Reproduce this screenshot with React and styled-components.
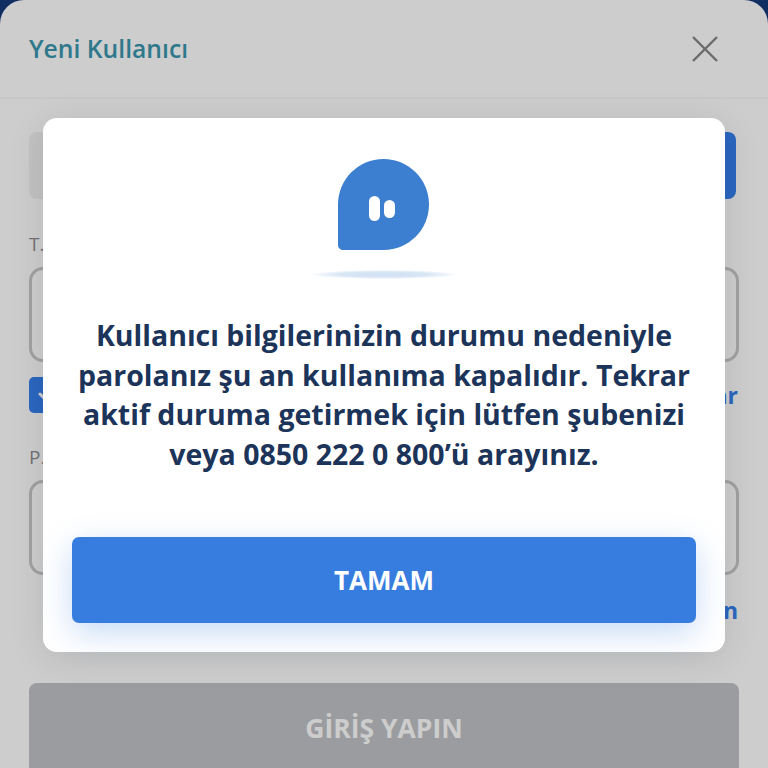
import React from "react";
import styled, { createGlobalStyle } from "styled-components";

const Global = createGlobalStyle`
  html, body { margin: 0; padding: 0; background: #163a7c; }
  #root { width: 768px; height: 768px; overflow: hidden; position: relative; }
  * { box-sizing: border-box; }
`;
const Sheet = styled.div`
  height: 768px; background: #ffffff; border-radius: 24px 24px 0 0; overflow: hidden;
  font-family: "Open Sans", "Noto Sans", sans-serif; display: flex; flex-direction: column;
`;
const Header = styled.header`
  height: 99px; flex: none; display: flex; align-items: center; justify-content: space-between;
  padding: 0 50px 0 29px; border-bottom: 2px solid #f8f8f8;
`;
const Title = styled.h1`
  margin: 0; font-size: 24.7px; font-weight: 600; color: #3a96ae; letter-spacing: 0;
`;
const Close = styled.button`
  width: 26px; height: 26px; padding: 0; border: 0; background: none; display: block;
  svg { display: block; }
`;
const Form = styled.div`
  flex: 1; display: flex; flex-direction: column; padding: 33px 29px 0;
`;
const Tabs = styled.div`
  height: 67px; display: flex; margin-right: 3px; flex: none;
`;
const Tab = styled.div`
  flex: 1; background: ${p => (p.$active ? "#3580ee" : "#f2f2f2")};
  border-radius: ${p => (p.$active ? "0 8px 8px 0" : "8px 0 0 8px")};
`;
const Label = styled.div`
  font-size: 19px; color: #8e8e93; line-height: 24px; margin-top: ${p => p.$top}px;
`;
const Input = styled.div`
  height: 95px; margin-top: 11px; border: 3px solid #c9c9cc; border-radius: 14px; flex: none;
`;
const CheckRow = styled.div`
  display: flex; align-items: center; justify-content: space-between; height: 36px; margin-top: 15px;
`;
const Check = styled.div`
  width: 36px; height: 36px; border-radius: 5px; background: #3580ee;
  display: flex; align-items: center; justify-content: center;
`;
const LinkText = styled.span`
  font-size: 23px; font-weight: 700; color: #3580ee; margin-right: 1px;
`;
const LinkRow = styled.div`
  display: flex; justify-content: flex-end; margin-top: 19px; height: 32px; align-items: center;
`;
const Submit = styled.button`
  margin-top: 57px; height: 86px; flex: none; width: 100%; border: 0; border-radius: 8px 8px 0 0;
  background: #c1c2c6; color: #ffffff; font-family: inherit; font-size: 26.5px; font-weight: 700;
  padding: 4px 0 0;
`;
const Dim = styled.div`
  position: absolute; inset: 0; background: rgba(0, 0, 0, 0.195);
`;
const Modal = styled.div`
  position: absolute; left: 43px; top: 118px; width: 682px; height: 534px;
  background: #ffffff; border-radius: 14px; box-shadow: 0 6px 36px rgba(0, 0, 0, 0.1);
  display: flex; flex-direction: column; align-items: center; padding: 41px 29px 0;
  font-family: "Open Sans", "Noto Sans", sans-serif;
`;
const IconWrap = styled.div`
  width: 146px; height: 120px; flex: none;
  svg { display: block; }
`;
const Message = styled.p`
  margin: 37px -10px 0; text-align: center; font-size: 28.5px; font-weight: 700; line-height: 39.5px;
  color: #1c3459; width: 660px; flex: none; white-space: nowrap;
`;
const OkButton = styled.button`
  margin-top: 63px; width: 624px; height: 86px; flex: none; border: 0; border-radius: 7px;
  background: #377de0; color: #ffffff; font-family: inherit; font-size: 26px; font-weight: 700;
  padding: 0 0 0;
  box-shadow: 0 10px 32px rgba(55, 125, 224, 0.28);
`;

export default function App() {
  return (
    <>
      <Global />
      <Sheet>
        <Header>
          <Title>Yeni Kullanıcı</Title>
          <Close aria-label="Kapat">
            <svg width="26" height="26" viewBox="0 0 26 26" fill="none" stroke="#858589" strokeWidth="2.4">
              <path d="M1 1L25 25M25 1L1 25" />
            </svg>
          </Close>
        </Header>
        <Form>
          <Tabs><Tab /><Tab $active /></Tabs>
          <Label $top={33}>T.C.</Label>
          <Input />
          <CheckRow>
            <Check>
              <svg width="20" height="16" viewBox="0 0 20 16" fill="none" stroke="#fff" strokeWidth="3" strokeLinecap="round">
                <path d="M3 7l6 6 9-10" />
              </svg>
            </Check>
            <LinkText>ar</LinkText>
          </CheckRow>
          <Label $top={32}>P.</Label>
          <Input />
          <LinkRow><LinkText>un</LinkText></LinkRow>
          <Submit>GİRİŞ YAPIN</Submit>
        </Form>
      </Sheet>
      <Dim />
      <Modal>
        <IconWrap>
          <svg width="146" height="120" viewBox="0 0 146 120">
            <defs>
              <radialGradient id="sh" cx="50%" cy="50%" r="50%">
                <stop offset="0%" stopColor="#cfe0f3" />
                <stop offset="60%" stopColor="#d9e6f5" />
                <stop offset="85%" stopColor="#eef4fb" />
                <stop offset="100%" stopColor="#ffffff" />
              </radialGradient>
            </defs>
            <path
              d="M72.5 0C97.6 0 118 20.4 118 45.5S97.6 91 72.5 91H32C29.2 91 27 88.8 27 86V45.5C27 20.4 47.4 0 72.5 0Z"
              fill="#3c7fd0"
            />
            <rect x="58" y="37" width="11" height="25" rx="5.5" fill="#fff" />
            <rect x="73" y="41" width="11" height="18" rx="5.5" fill="#fff" />
            <ellipse cx="73" cy="115.5" rx="73" ry="4.5" fill="url(#sh)" />
          </svg>
        </IconWrap>
        <Message>
          Kullanıcı bilgilerinizin durumu nedeniyle<br />
          parolanız şu an kullanıma kapalıdır. Tekrar<br />
          aktif duruma getirmek için lütfen şubenizi<br />
          veya 0850 222 0 800’ü arayınız.
        </Message>
        <OkButton>TAMAM</OkButton>
      </Modal>
    </>
  );
}
